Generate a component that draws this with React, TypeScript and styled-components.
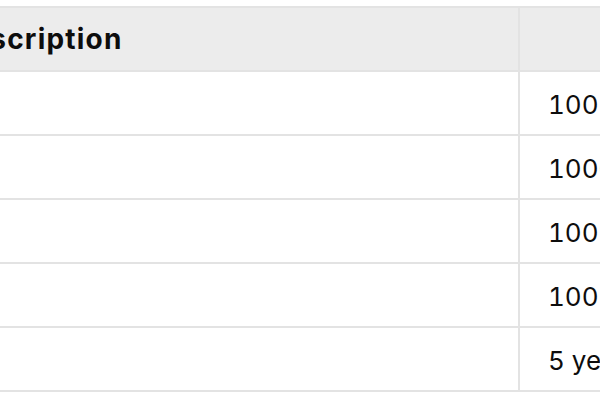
import React from "react";
import styled, { createGlobalStyle } from "styled-components";

const Global = createGlobalStyle`
  html, body { margin: 0; padding: 0; background: #ffffff; }
  body { font-family: Inter, "Liberation Sans", Arial, sans-serif; color: #0d0d0d; }
`;

const Viewport = styled.div`
  width: 600px;
  height: 400px;
  overflow: hidden;
  padding-top: 6px;
  box-sizing: border-box;
`;

const Table = styled.table`
  border-collapse: collapse;
  margin-left: -67px;
  width: 915px;
  table-layout: fixed;
`;

const HeadCell = styled.th<{ $w: number }>`
  width: ${(p) => p.$w}px;
  height: 64px;
  box-sizing: border-box;
  background: #ececec;
  border: 2px solid #e3e3e3;
  text-align: left;
  font-size: 28px;
  letter-spacing: 1.2px;
  font-weight: 700;
  padding: 0 30px 0 16px;
  white-space: nowrap;
`;

const Cell = styled.td`
  height: 64px;
  box-sizing: border-box;
  border: 2px solid #e3e3e3;
  padding: 2px 30px 0 28px;
  font-size: 26px;
  letter-spacing: 0;
  font-feature-settings: "tnum";
  white-space: nowrap;
  overflow: hidden;
  font-weight: 400;
`;

const rows = [
  { desc: "", value: "100 ms" },
  { desc: "", value: "1000 ms" },
  { desc: "", value: "1002" },
  { desc: "", value: "100 KB" },
  { desc: "", value: "5 years" },
];

export default function App() {
  return (
    <>
      <Global />
      <Viewport>
        <Table>
          <thead>
            <tr>
              <HeadCell $w={585}>Description</HeadCell>
              <HeadCell $w={330}></HeadCell>
            </tr>
          </thead>
          <tbody>
            {rows.map((r, i) => (
              <tr key={i}>
                <Cell>{r.desc}</Cell>
                <Cell>{r.value}</Cell>
              </tr>
            ))}
          </tbody>
        </Table>
      </Viewport>
    </>
  );
}
